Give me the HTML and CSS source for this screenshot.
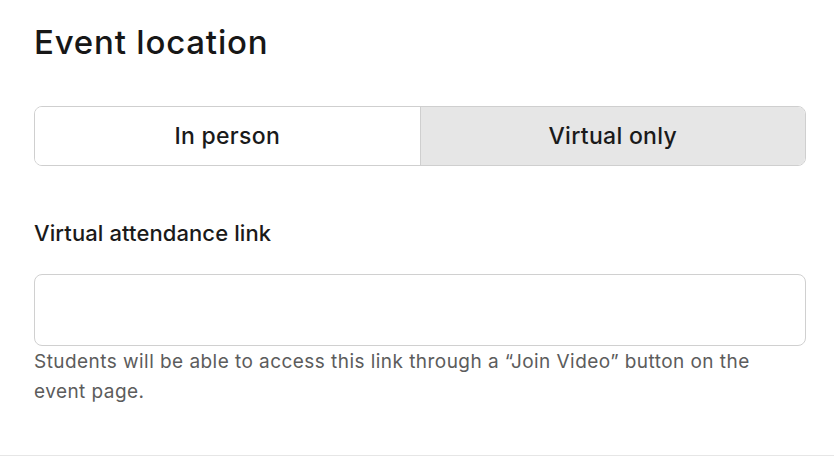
FILE: index.html
```html
<!DOCTYPE html>
<html lang="en">
<head>
<meta charset="utf-8">
<link rel="stylesheet" href="styles.css">
</head>
<body>
<section class="panel">
  <h2 class="title">Event location</h2>
  <div class="segmented">
    <button class="seg">In person</button>
    <button class="seg seg-active">Virtual only</button>
  </div>
  <label class="label" for="link">Virtual attendance link</label>
  <input class="input" id="link" type="text">
  <p class="help">Students will be able to access this link through a “Join Video” button on the event page.</p>
</section>
</body>
</html>
```
FILE: styles.css
```css
html, body {
  margin: 0;
  padding: 0;
  background: #fff;
}
body {
  font-family: Inter, "Liberation Sans", Arial, sans-serif;
  color: #1a1a1a;
}
.panel {
  padding: 22px 28px 0 34px;
  height: 433px;
  border-bottom: 1px solid #e6e6e6;
  display: flex;
  flex-direction: column;
}
.title {
  margin: 0;
  font-size: 33px;
  line-height: 40px;
  font-weight: 500;
  letter-spacing: 0.8px;
  color: #171717;
}
.segmented {
  margin-top: 44px;
  display: flex;
  height: 58px;
  border: 1px solid #cfcfcf;
  border-radius: 8px;
  overflow: hidden;
}
.seg {
  flex: 1;
  border: none;
  background: #fff;
  font-family: inherit;
  font-size: 23px;
  font-weight: 500;
  letter-spacing: 0.3px;
  color: #1a1a1a;
  padding: 0;
}
.seg-active {
  background: #e6e6e6;
  border-left: 1px solid #cfcfcf;
}
.label {
  margin-top: 55px;
  font-size: 22px;
  line-height: 24px;
  font-weight: 500;
  letter-spacing: 0.1px;
  color: #1a1a1a;
}
.input {
  margin-top: 29px;
  height: 72px;
  box-sizing: border-box;
  border: 1px solid #d0d0d0;
  border-radius: 8px;
  padding: 0 16px;
  font-size: 18px;
}
.help {
  margin: 1px 0 0;
  font-size: 19px;
  line-height: 30px;
  letter-spacing: 0.45px;
  color: #5c5c5c;
  padding-right: 40px;
}
```
